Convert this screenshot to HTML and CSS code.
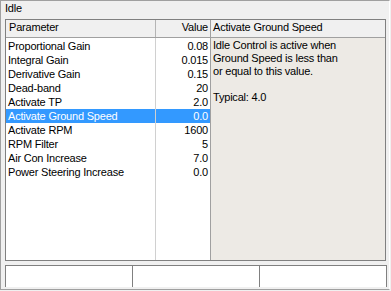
FILE: index.html
```html
<!DOCTYPE html>
<html>
<head>
<meta charset="utf-8">
<link rel="stylesheet" href="styles.css">
</head>
<body>
<div class="frame">
  <div class="title">Idle</div>
  <div class="table">
    <div class="list">
      <div class="hdr">
        <div class="c1">Parameter</div>
        <div class="c2">Value</div>
      </div>
      <div class="rows">
        <div class="row"><div class="c1">Proportional Gain</div><div class="c2">0.08</div></div>
        <div class="row"><div class="c1">Integral Gain</div><div class="c2">0.015</div></div>
        <div class="row"><div class="c1">Derivative Gain</div><div class="c2">0.15</div></div>
        <div class="row"><div class="c1">Dead-band</div><div class="c2">20</div></div>
        <div class="row"><div class="c1">Activate TP</div><div class="c2">2.0</div></div>
        <div class="row sel"><div class="c1">Activate Ground Speed</div><div class="c2">0.0</div></div>
        <div class="row"><div class="c1">Activate RPM</div><div class="c2">1600</div></div>
        <div class="row"><div class="c1">RPM Filter</div><div class="c2">5</div></div>
        <div class="row"><div class="c1">Air Con Increase</div><div class="c2">7.0</div></div>
        <div class="row"><div class="c1">Power Steering Increase</div><div class="c2">0.0</div></div>
      </div>
    </div>
    <div class="desc">
      <div class="dhdr">Activate Ground Speed</div>
      <div class="dbody">Idle Control is active when<br>Ground Speed is less than<br>or equal to this value.<br><br>Typical: 4.0</div>
    </div>
  </div>
  <div class="status">
    <div class="pane"></div>
    <div class="pane"></div>
    <div class="pane last"></div>
  </div>
</div>
</body>
</html>
```
FILE: styles.css
```css
html, body {
  margin: 0;
  padding: 0;
  background: #f0f0f0;
}
body {
  width: 391px;
  height: 291px;
  overflow: hidden;
  font-family: "Liberation Sans", Arial, sans-serif;
  font-size: 11px;
  letter-spacing: -0.2px;
  color: #000;
}
.frame {
  box-sizing: border-box;
  width: 390px;
  height: 290px;
  border-top: 1px solid #a0a0a0;
  border-left: 1px solid #a0a0a0;
  border-bottom: 1px solid #a0a0a0;
  border-right: 1px solid #ffffff;
  display: flex;
  flex-direction: column;
}
.title {
  height: 18px;
  line-height: 14px;
  padding-left: 4px;
  box-sizing: border-box;
}
.table {
  margin-left: 4px;
  width: 381px;
  height: 242px;
  box-sizing: border-box;
  border: 1px solid #808080;
  display: flex;
  background: #fff;
}
.list {
  width: 204px;
  display: flex;
  flex-direction: column;
}
.hdr {
  display: flex;
  height: 18px;
  box-sizing: border-box;
  border-bottom: 1px solid #a0a0a0;
  background: #f0f0f0;
  line-height: 14px;
}
.hdr .c1 {
  border-right: 1px solid #b4b4b4;
  padding-left: 3px;
}
.c1 {
  width: 150px;
  box-sizing: border-box;
  padding-left: 2px;
  white-space: nowrap;
  overflow: hidden;
}
.c2 {
  width: 54px;
  box-sizing: border-box;
  padding-right: 2px;
  text-align: right;
  white-space: nowrap;
}
.rows {
  flex: 1;
  padding-top: 1px;
  background: linear-gradient(#d0d0d0, #d0d0d0) 149px 0 / 1px 100% no-repeat, #ffffff;
}
.row {
  display: flex;
  height: 14px;
  line-height: 14px;
}
.row .c1 {
  border-right: 1px solid #d0d0d0;
}
.row.sel {
  background: #3399ff;
  color: #ffffff;
}
.desc {
  flex: 1;
  display: flex;
  flex-direction: column;
  border-left: 1px solid #a0a0a0;
  background: #edeae5;
}
.dhdr {
  height: 18px;
  box-sizing: border-box;
  border-bottom: 1px solid #a0a0a0;
  background: #f0f0f0;
  line-height: 14px;
  padding-left: 2px;
  white-space: nowrap;
}
.dbody {
  flex: 1;
  padding: 1px 0 0 2px;
  line-height: 13px;
}
.status {
  margin-top: 4px;
  margin-left: 4px;
  width: 382px;
  height: 22px;
  display: flex;
}
.pane {
  width: 127px;
  box-sizing: border-box;
  background: #ffffff;
  border-top: 1px solid #808080;
  border-left: 1px solid #808080;
}
.pane.last {
  width: 128px;
  border-right: 1px solid #808080;
}
```
